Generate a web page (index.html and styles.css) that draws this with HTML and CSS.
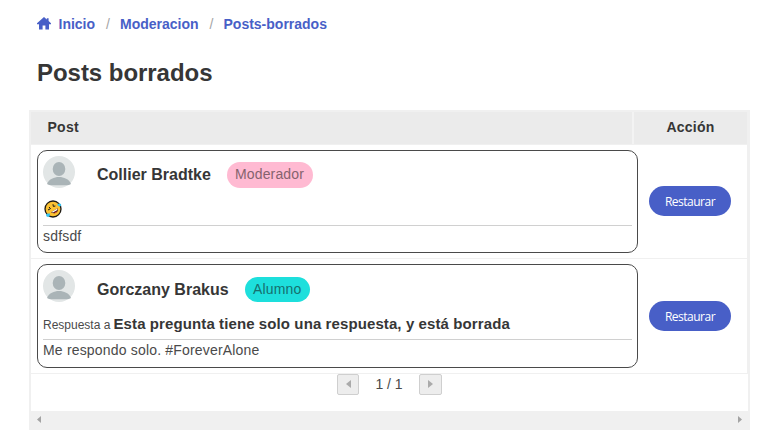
FILE: index.html
```html
<!DOCTYPE html>
<html lang="es">
<head>
<meta charset="utf-8">
<title>Posts borrados</title>
<link rel="stylesheet" href="styles.css">
</head>
<body>
<nav class="breadcrumb">
  <svg class="home" viewBox="0 0 14 13"><path d="M7 0 0 6.2V7.2H2V12.4H5.6V8.4H8.4V12.4H12V7.2H14V6.2L11.6 4V1.2H9.8V2.4Z"/></svg>
  <a class="crumb crumb-home">Inicio</a><span class="sep">/</span><a class="crumb crumb-mod">Moderacion</a><span class="sep">/</span><a class="crumb crumb-last">Posts-borrados</a>
</nav>
<h1 class="title">Posts borrados</h1>
<section class="panel">
  <header class="row head">
    <div class="cell-post"><span class="head-post">Post</span></div>
    <div class="cell-action"><span class="head-action">Acción</span></div>
  </header>
  <div class="row first">
    <div class="cell-post">
      <article class="card">
        <div class="author">
          <svg class="avatar" viewBox="0 0 32 32"><circle cx="16" cy="16" r="16" fill="#e2e6e6"/><ellipse cx="16" cy="13" rx="6.3" ry="7" fill="#aab4b7"/><path d="M4 28C6 23 11 21 16 21S26 23 28 28Q26 29.3 24 29.3H8Q6 29.3 4 28Z" fill="#aab4b7"/></svg>
          <span class="name name-one">Collier Bradtke</span>
          <span class="badge moderator">Moderador</span>
        </div>
        <div class="subject">
          <svg class="emoji" viewBox="0 0 18 18"><circle cx="9" cy="9" r="8" fill="#fcc232" stroke="#1d1914" stroke-width="1.3"/><path d="M4 10 6.5 8.6 5 7M9 4.2 9.3 6.4 11.4 6" fill="none" stroke="#1d1914"/><path d="M7 12.2 13.8 8.2C15 11.5 11 15 7 12.2Z" fill="#4e1512"/><path d="M7.5 12 13.4 8.6V10L9 12.5Z" fill="#fff"/><path d="M10.2 13.4Q11 11.5 13 11.5 12.2 13.3 10.2 13.4Z" fill="#e5433c"/><path d="M13 4.6Q16 2.8 17 4.2T16 6.6Q14.5 6.8 13 4.6ZM6 13.6Q6.2 17 4 17T2 14.6Q3 13 6 13.6Z" fill="#35c1ee"/></svg>
        </div>
        <div class="body body-one">sdfsdf</div>
      </article>
    </div>
    <div class="cell-action"><button class="restore">Restaurar</button></div>
  </div>
  <div class="row second">
    <div class="cell-post">
      <article class="card">
        <div class="author">
          <svg class="avatar" viewBox="0 0 32 32"><circle cx="16" cy="16" r="16" fill="#e2e6e6"/><ellipse cx="16" cy="13" rx="6.3" ry="7" fill="#aab4b7"/><path d="M4 28C6 23 11 21 16 21S26 23 28 28Q26 29.3 24 29.3H8Q6 29.3 4 28Z" fill="#aab4b7"/></svg>
          <span class="name name-two">Gorczany Brakus</span>
          <span class="badge student">Alumno</span>
        </div>
        <div class="subject"><span class="reply">Respuesta a</span><strong class="question">Esta pregunta tiene solo una respuesta, y está borrada</strong></div>
        <div class="body body-two">Me respondo solo. #ForeverAlone</div>
      </article>
    </div>
    <div class="cell-action"><button class="restore">Restaurar</button></div>
  </div>
  <div class="pager">
    <button class="page prev"><svg viewBox="0 0 5 8"><path d="M5 0V8L0 4Z"/></svg></button>
    <span class="count">1 / 1</span>
    <button class="page next"><svg viewBox="0 0 5 8"><path d="M0 0V8L5 4Z"/></svg></button>
  </div>
  <div class="scroll"><svg viewBox="0 0 4 7"><path d="M4 0V7L0 3.5Z"/></svg><svg viewBox="0 0 4 7"><path d="M0 0V7L4 3.5Z"/></svg></div>
</section>
</body>
</html>
```
FILE: styles.css
```css
* { box-sizing: border-box; }
body { margin: 0; background: #fff; color: #363636; font-family: "Liberation Sans", Arial, sans-serif; font-size: 14px; overflow: hidden; }
.breadcrumb { display: flex; height: 16px; margin: 16px 0 0 37px; line-height: 16px; font-weight: 700; white-space: nowrap; }
.home { width: 14px; height: 13px; margin: 1px 7.5px 0 0; fill: #485fc7; }
.crumb { color: #485fc7; }
.crumb-home { width: 37.5px; }
.crumb-mod { width: 79.5px; }
.sep { width: 24px; text-align: center; color: #a5a5a5; font-weight: 400; }
.title { margin: 27px 0 0 37px; font-size: 24px; line-height: 28px; height: 28px; white-space: nowrap; letter-spacing: -.04px; }
.panel { width: 721px; height: 320px; margin: 23px 0 0 29px; border: 2px solid #f0f0f0; border-bottom: 0; }
.row { display: flex; border-bottom: 1px solid #f0f0f0; border-right: 1px solid #f0f0f0; }
.head { height: 33px; background: #ebebeb; line-height: 30px; font-weight: 700; letter-spacing: .25px; }
.cell-post { width: 607px; padding: 5px 0 5px 6px; }
.head .cell-post { width: 603px; padding: 0 0 0 16.5px; border-right: 2px solid #f3f3f3; }
.cell-action { display: flex; flex: 1; align-items: center; padding-left: 11px; }
.head .cell-action { justify-content: center; padding: 0 0 2px; }
.first { height: 114px; }
.second { height: 115px; }
.first .cell-action { padding-bottom: 1px; }
.first .restore { margin-bottom: 1px; }
.card { height: 103px; border: 1px solid #4a4a4a; border-radius: 10px; padding: 5px 5px 0; color: #4a4a4a; white-space: nowrap; }
.second .card { height: 104px; }
.author { display: flex; height: 38px; }
.avatar { width: 32px; height: 32px; margin-right: 22px; }
.name { height: 20px; margin-top: 9px; line-height: 20px; font-size: 16px; font-weight: 700; color: #363636; }
.name-one { width: 130px; }
.name-two { width: 148px; margin-top: 10px; }
.badge { height: 26px; margin-top: 6px; padding: 0 8px; border-radius: 13px; line-height: 25px; letter-spacing: .15px; }
.moderator { width: 86px; background: #ffbad2; color: #85636e; }
.student { width: 65px; height: 25px; margin-top: 7px; background: #1ddfdc; color: #166f6e; }
.subject { display: flex; height: 32px; border-bottom: 1px solid #d0d0d0; line-height: 32px; }
.emoji { width: 18px; height: 18px; margin: 6px 0 0 1px; }
.reply { width: 70.5px; font-size: 12px; line-height: 34px; }
.question { color: #363636; font-size: 15px; letter-spacing: .1px; }
.body { height: 20px; line-height: 21px; letter-spacing: .18px; }
.restore { width: 82px; height: 30px; padding: 2px 0 0; border: 0; border-radius: 15px; background: #485fc7; color: #fff; font-family: "Open Sans", sans-serif; font-size: 12px; line-height: 28px; letter-spacing: -.5px; }
.pager { display: flex; height: 37px; }
.page { display: flex; justify-content: center; align-items: center; height: 21px; padding: 0; background: #ededed; border: 1px solid #cfcfcf; border-radius: 2px; }
.page svg { width: 5px; height: 8px; margin-bottom: 1px; fill: #aaa; }
.prev { width: 22px; margin-left: 306px; }
.next { width: 23px; }
.count { width: 60px; text-align: center; line-height: 21px; color: #4a4a4a; }
.scroll { display: flex; justify-content: space-between; align-items: center; height: 19px; padding: 0 6px; background: #f0f0f0; }
.scroll svg { width: 4px; height: 7px; fill: #a3a3a3; margin-bottom: 2px; }
```
